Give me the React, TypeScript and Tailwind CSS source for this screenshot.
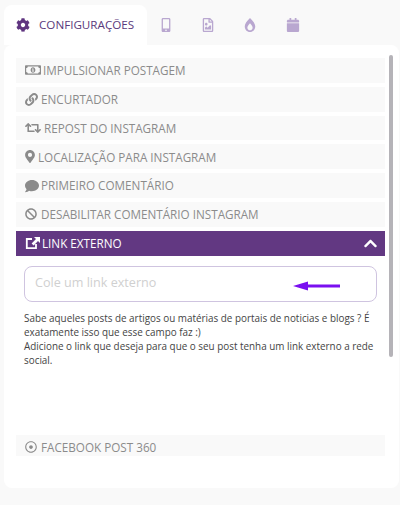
import {
  FaBan,
  FaBurn,
  FaCalendar,
  FaChevronUp,
  FaCog,
  FaComment,
  FaLink,
  FaMapMarkerAlt,
  FaMobileAlt,
  FaRegDotCircle,
  FaRegFileImage,
  FaRegMoneyBillAlt,
  FaRetweet,
} from 'react-icons/fa';
import type { ReactNode } from 'react';

const ROWS: { label: string; icon: ReactNode }[] = [
  { label: 'IMPULSIONAR POSTAGEM', icon: <FaRegMoneyBillAlt className="w-4 h-4 mr-[2px]" /> },
  { label: 'ENCURTADOR', icon: <FaLink className="w-[13px] h-[13px] mr-[3px]" /> },
  { label: 'REPOST DO INSTAGRAM', icon: <FaRetweet className="w-4 h-4 mr-[3px]" /> },
  { label: 'LOCALIZAÇÃO PARA INSTAGRAM', icon: <FaMapMarkerAlt className="w-[10px] h-[13px] mr-[3px]" /> },
  { label: 'PRIMEIRO COMENTÁRIO', icon: <FaComment className="w-[14px] h-[14px] mr-[2px]" /> },
  { label: 'DESABILITAR COMENTÁRIO INSTAGRAM', icon: <FaBan className="w-3 h-3 mr-1" /> },
];

function Row({ label, icon }: { label: string; icon: ReactNode }) {
  return (
    <div className="h-[24.8px] shrink-0 flex items-center pl-[9px] bg-[#f9f9f9] text-[#8b8b8b] text-[11.7px]">
      {icon}
      <span className="pt-px">{label}</span>
    </div>
  );
}

export default function App() {
  return (
    <div className="w-[400px] h-[505px] bg-[#f9f9f9] pt-[5px] pl-1 overflow-hidden" style={{ fontFamily: '"Open Sans", sans-serif' }}>
      {/* Tabs */}
      <div className="flex h-10 items-center">
        <div className="w-[143px] h-10 bg-white rounded-t-lg flex items-center pl-3 gap-[9px] text-[11.65px] text-[#5a3a7c]">
          <FaCog className="w-[14px] h-[14px] text-[#5f3480]" />
          <span>CONFIGURAÇÕES</span>
        </div>
        <div className="flex items-center text-[#b9a7d0]">
          <FaMobileAlt className="w-[14px] h-[14px] ml-[12px]" />
          <FaRegFileImage className="w-3 h-[14px] ml-[29px]" />
          <FaBurn className="w-3 h-[14px] ml-[30px]" />
          <FaCalendar className="w-[14px] h-[14px] ml-[30px]" />
        </div>
      </div>

      {/* Panel */}
      <div className="relative w-[395px] h-[443px] bg-white rounded-lg pt-[13px] pl-3">
        <div className="w-[369px] h-[398px] overflow-hidden flex flex-col gap-1">
          {ROWS.map((row) => (
            <Row key={row.label} label={row.label} icon={row.icon} />
          ))}

          <div className="h-[24.8px] shrink-0 flex items-center pl-[9px] pr-2 bg-[#623882] text-white text-[11.7px]">
            <svg className="w-[15px] h-[14px] mr-[2px]" viewBox="0 0 15 14" fill="none">
              <path d="M7 3H1.8V12.2H11V8" stroke="currentColor" strokeWidth="1.8" />
              <path d="M9 1H15V7L13 5L8.6 9.4L6.6 7.4L11 3Z" fill="currentColor" />
            </svg>
            <span className="pt-px">LINK EXTERNO</span>
            <FaChevronUp className="w-[13px] h-[15px] ml-auto" />
          </div>

          <div className="shrink-0 h-[171px] px-2 pt-[6px]">
            <div className="h-9 rounded-lg border border-[#cfc4e0] flex items-center pl-[10px] pr-[35px] text-[12.6px] text-[#d0d0d0]">
              <span>Cole um link externo</span>
              <svg className="ml-auto mt-[5px]" width="48" height="10" viewBox="0 0 48 10">
                <path d="M0 5 L15 0.5 V3.6 H47 V6.4 H15 V9.5 Z" fill="#7a0ff0" />
              </svg>
            </div>
            <p className="mt-[9px] w-[352px] text-[9.9px] leading-[14px] text-[#444444]">
              Sabe aqueles posts de artigos ou matérias de portais de noticias e blogs ? É exatamente isso que esse campo faz :)
              <br />
              Adicione o link que deseja para que o seu post tenha um link externo a rede social.
            </p>
          </div>

          <Row label="FACEBOOK POST 360" icon={<FaRegDotCircle className="w-3 h-3 mr-1" />} />
        </div>

        {/* scrollbar thumb */}
        <div className="absolute left-[385px] top-[10px] w-[4px] h-[302px] rounded-full bg-[#b5b3b8]" />
      </div>
    </div>
  );
}
